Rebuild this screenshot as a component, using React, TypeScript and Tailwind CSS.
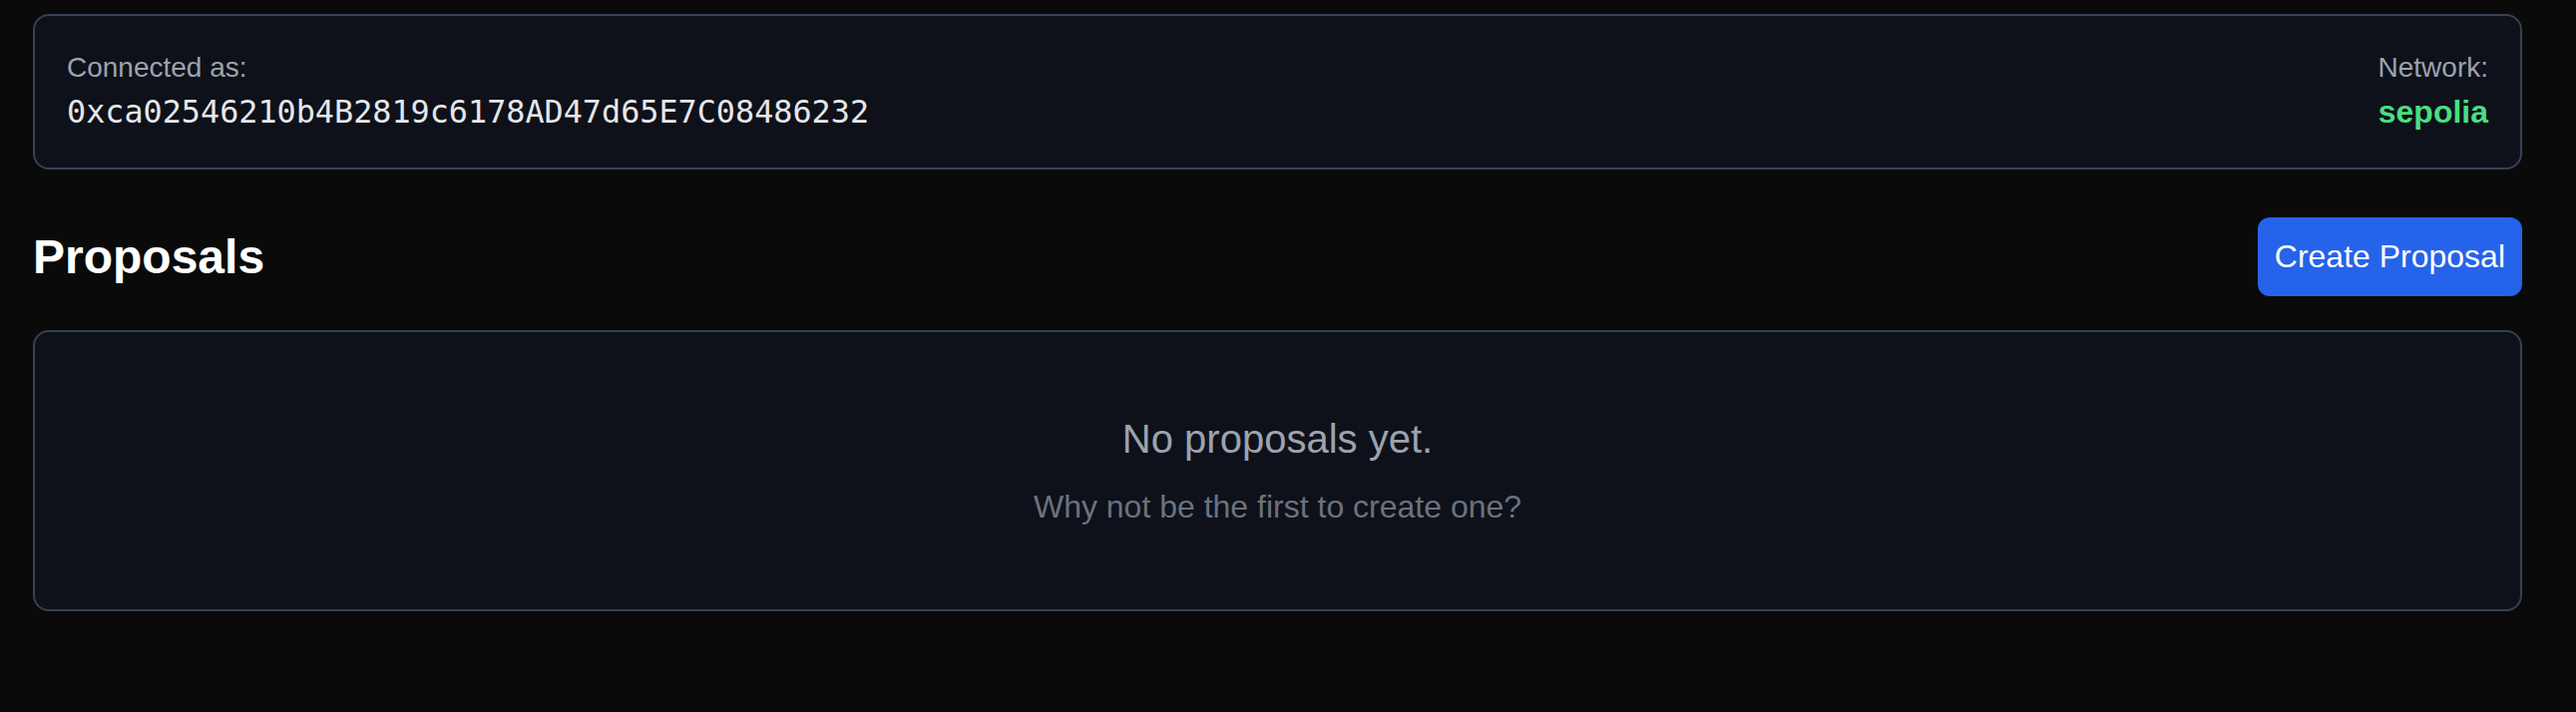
import React from "react";

const sans = "font-['Liberation_Sans',Arial,sans-serif]";
const mono = "font-['DejaVu_Sans_Mono','Liberation_Mono',monospace]";

const App = () => {
  const address = "0xca02546210b4B2819c6178AD47d65E7C08486232";
  const network = "sepolia";
  const proposals: { id: number; title: string }[] = [];

  return (
    <div className={`min-h-[714px] bg-[#0a0a0a] pt-[14px] pl-[33px] pr-[54px] ${sans}`}>
      {/* wallet info */}
      <div className="flex justify-between rounded-[16px] border-2 border-[#374151] bg-[#0e1119] p-[32px]">
        <div className="flex flex-col">
          <span className="text-[28px] leading-[40px] text-[#9ca3af]">Connected as:</span>
          <span className={`text-[31.8px] leading-[48px] text-[#e5e7eb] ${mono}`}>{address}</span>
        </div>
        <div className="flex flex-col items-end">
          <span className="text-[28px] leading-[40px] text-[#9ca3af]">Network:</span>
          <span className="text-[32px] leading-[48px] font-bold text-[#4ade80]">{network}</span>
        </div>
      </div>

      {/* header */}
      <div className="mt-[48px] mb-[34px] flex items-center justify-between">
        <h1 className="text-[48px] leading-[64px] font-bold text-white">Proposals</h1>
        <button className="rounded-[12px] bg-[#2563eb] px-[17px] py-[16px] text-[32px] leading-[47px] text-white">
          Create Proposal
        </button>
      </div>

      {proposals.length === 0 ? (
        <div className="flex flex-col items-center rounded-[16px] border-2 border-[#374151] bg-[#0e1119] py-[79px]">
          <p className="text-[40px] leading-[56px] text-[#9ca3af]">No proposals yet.</p>
          <p className="mt-[16px] text-[32px] leading-[48px] text-[#6b7280]">
            Why not be the first to create one?
          </p>
        </div>
      ) : null}
    </div>
  );
};

export default App;
